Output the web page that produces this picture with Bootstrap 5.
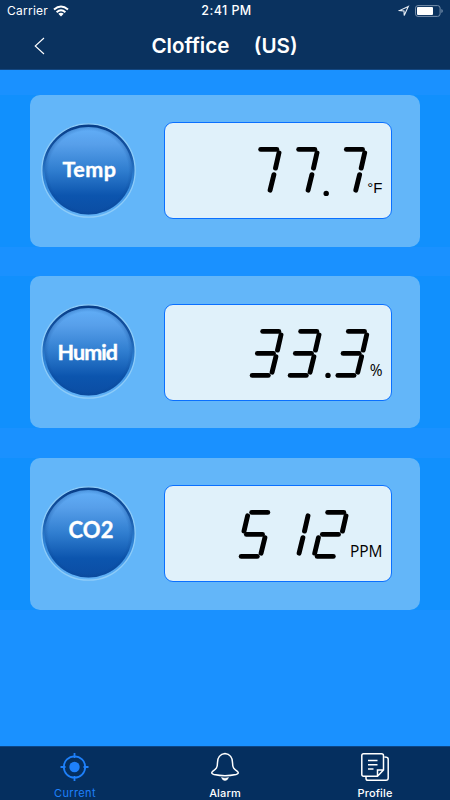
<!DOCTYPE html>
<html lang="en">
<head>
<meta charset="utf-8">
<meta name="viewport" content="width=device-width, initial-scale=1">
<title>Cloffice (US)</title>
<link rel="stylesheet" href="https://cdn.jsdelivr.net/npm/bootstrap@5.3.0/dist/css/bootstrap.min.css">
<style>
body{font-family:Inter,"Liberation Sans",sans-serif;background:#1a91ff;height:800px;overflow:hidden}
svg{display:block;flex:none}
.top-area{background:#0a325f;height:70px;border-bottom:1px solid #124681}
.status-line{height:22px;font-size:12px;padding:0 7px}
.status-line>div{flex:1 1 0}
.carrier{letter-spacing:.25px}
.clock{font-size:12.5px;font-weight:500;letter-spacing:.45px;padding:1px 0 0 3px}
.title-line{height:48px;padding:0 47px 0 34px}
.title-line h1{font-size:20.6px;font-weight:600;white-space:pre;word-spacing:.9px;margin:0;padding-top:1px}
.readings{padding-top:24.5px;gap:29.5px}
.band{background:#1190fd;padding:0 30px}
.reading{height:152px;background:#63b6f9;border-radius:10px;padding:0 28px 0 11px}
.dial-text{font-family:Lato,sans-serif;font-weight:700;fill:#fff;stroke:#fff;stroke-width:.4px}
.display{width:228px;height:97px;background:#e0f1fa;border:1px solid #0a70ff;border-radius:9px;padding-right:8.500px}
.unit{font-family:"Open Sans","Noto Sans",sans-serif;font-size:15.500px;line-height:18px;color:#000;margin:0 0 21px}
.unit-f{font-family:"Liberation Sans",sans-serif;font-size:15px}
.segments{fill:none;stroke:#000;stroke-width:4.9px;stroke-linecap:round;overflow:visible;margin:0 -.5px 22px 0}
.tabs{height:54px;background:#052f5f;border-top:1px solid #0c4585;font-size:11px;font-weight:500;letter-spacing:.15px}
.tabs a{color:#fff;text-decoration:none;padding-top:5px;line-height:14px}
.tabs a svg{margin-bottom:4px}
.tabs a.current{color:#1e80fa;font-weight:400;letter-spacing:.35px}
</style>
<script src="https://cdn.jsdelivr.net/npm/bootstrap@5.3.0/dist/js/bootstrap.bundle.min.js"></script>
</head>
<body class="d-flex flex-column">
<!-- Lit bars a-g of a slanted seven segment indicator -->
<svg width="0" height="0" class="position-absolute">
  <defs>
    <line id="a" x1="12.7" y1="2.4" x2="28.8" y2="2.4"/>
    <line id="b" x1="31" y1="5.8" x2="27.5" y2="21.1"/>
    <line id="c" x1="25.9" y1="27.7" x2="22.1" y2="43.2"/>
    <line id="d" x1="2.2" y1="46.4" x2="18.3" y2="46.4"/>
    <line id="e" x1="3.4" y1="27.7" x2="-.3" y2="43.2"/>
    <line id="f" x1="8.6" y1="5.8" x2="5" y2="21.1"/>
    <line id="g" x1="7.4" y1="24.4" x2="23.5" y2="24.4"/>
  </defs>
</svg>
<header class="top-area text-white">
  <div class="status-line d-flex align-items-center">
    <div class="d-flex align-items-center"><span class="carrier me-1">Carrier</span>
      <svg width="18" height="12" viewBox="0 0 18 12" fill="none" stroke="#fff" stroke-width="2"><path d="M2 4.500Q9-1.500 16 4.500M4.600 7.200Q9 3.300 13.400 7.200"/><path d="M9 11.500 6.300 8.800Q9 6.800 11.700 8.800Z" fill="#fff" stroke="none"/></svg>
    </div>
    <div class="clock text-center text-nowrap">2:41 PM</div>
    <div class="d-flex align-items-center justify-content-end gap-1">
      <svg width="12" height="12" viewBox="0 0 12 12" fill="none" stroke="#e8eef6" stroke-width="1.1"><path d="M10.300 1.500 1.500 5.600 6 6 6.200 10.500Z"/></svg>
      <svg width="29" height="12" viewBox="0 0 29 12"><rect x="1.5" y=".6" width="24.6" height="10.8" rx="2.5" fill="none" stroke="#7890ac"/><rect x="3" y="2" width="16" height="8" rx="1" fill="#fff"/><path d="M27.400 4v4q1.400-.6 1.400-2t-1.400-2Z" fill="#7890ac"/></svg>
    </div>
  </div>
  <div class="title-line d-flex align-items-center">
    <svg width="12" height="18" viewBox="0 0 12 18" fill="none" stroke="#fff" stroke-width="1.1"><path d="M10 1 1.200 9 10 17"/></svg>
    <h1 class="flex-grow-1 text-center">Cloffice    (US)</h1>
  </div>
</header>

<main class="readings flex-grow-1 d-flex flex-column">
  <div class="band"><section class="reading d-flex align-items-center justify-content-between">
    <svg width="96" height="96" viewBox="0 0 96 96">
      <defs>
        <linearGradient id="rim" x2="0" y2="1"><stop offset="0" stop-color="#063c87"/><stop offset=".3" stop-color="#1656a5"/><stop offset=".6" stop-color="#2f83d6"/><stop offset=".85" stop-color="#4fa3ee"/><stop offset="1" stop-color="#66b6f8"/></linearGradient>
        <linearGradient id="face" x2="0" y2="1"><stop offset="0" stop-color="#62aff8"/><stop offset=".2" stop-color="#579fea"/><stop offset=".5" stop-color="#2f7dcf"/><stop offset=".78" stop-color="#0c55ae"/><stop offset="1" stop-color="#0b4da3"/></linearGradient>
        <radialGradient id="shade"><stop offset=".91" stop-color="#063f8c" stop-opacity="0"/><stop offset="1" stop-color="#063f8c" stop-opacity=".25"/></radialGradient>
      </defs>
      <g id="dial"><circle cx="47.5" cy="47.5" r="46.7" fill="url(#rim)" stroke="#8dccf9" stroke-width="1.3"/><circle cx="47.5" cy="47.8" r="43.8" fill="url(#face)"/><circle cx="47.5" cy="47.8" r="43.8" fill="url(#shade)"/></g>
      <text class="dial-text" x="21.5" y="54" font-size="21.5" textLength="53.5">Temp</text>
    </svg>
    <div class="display d-flex align-items-end justify-content-end">
      <svg class="segments" width="120" height="49" role="img" aria-label="77.7">
        <g id="seven"><use href="#a"/><use href="#b"/><use href="#c"/></g>
        <use href="#seven" x="38"/>
        <circle cx="78.2" cy="46.4" r="2.7" fill="#000" stroke="none"/>
        <use href="#seven" x="85.7"/>
      </svg>
      <span class="unit unit-f">°F</span>
    </div>
  </section></div>

  <div class="band"><section class="reading d-flex align-items-center justify-content-between">
    <svg width="96" height="96" viewBox="0 0 96 96"><use href="#dial"/><text class="dial-text" x="16.5" y="55.5" font-size="21.5" textLength="60.5">Humid</text></svg>
    <div class="display d-flex align-items-end justify-content-end">
      <svg class="segments" width="120" height="49" role="img" aria-label="33.3">
        <g id="three"><use href="#a"/><use href="#b"/><use href="#g"/><use href="#c"/><use href="#d"/></g>
        <use href="#three" x="38"/>
        <circle cx="78" cy="46.4" r="2.7" fill="#000" stroke="none"/>
        <use href="#three" x="85.7"/>
      </svg>
      <span class="unit">%</span>
    </div>
  </section></div>

  <div class="band"><section class="reading d-flex align-items-center justify-content-between">
    <svg width="96" height="96" viewBox="0 0 96 96"><use href="#dial"/><text class="dial-text" x="27.5" y="52" font-size="22" textLength="45">CO2</text></svg>
    <div class="display d-flex align-items-end justify-content-end">
      <svg class="segments" width="111" height="49" role="img" aria-label="512">
        <g><use href="#a"/><use href="#f"/><use href="#g"/><use href="#c"/><use href="#d"/></g>
        <g transform="translate(38)"><use href="#b"/><use href="#c"/></g>
        <g transform="translate(76)"><use href="#a"/><use href="#b"/><use href="#g"/><use href="#e"/><use href="#d"/></g>
      </svg>
      <span class="unit">PPM</span>
    </div>
  </section></div>
</main>

<nav class="tabs d-flex">
  <a href="#" class="current flex-fill w-100 d-flex flex-column align-items-center">
    <svg width="30" height="30" viewBox="0 0 30 30" fill="none" stroke="#1e80fa" stroke-width="1.8"><circle cx="14.5" cy="15" r="10.7"/><circle cx="14.5" cy="15" r="5.2" fill="#1e80fa" stroke="none"/><path d="M14.500 1v5M14.500 24v5M.5 15h5M23.500 15h5"/></svg>Current</a>
  <a href="#" class="flex-fill w-100 d-flex flex-column align-items-center">
    <svg width="30" height="30" viewBox="0 0 30 30" fill="none" stroke="#fff" stroke-width="1.5"><path d="M15 1.500C10 2 7.500 6 7.500 10.500 7.500 16 6 17 2.500 19.500 1 21 2 22 4 22.500 11 24 19 24 26 22.500 28 22 29 21 27.500 19.500 24 17 22.500 16 22.500 10.500 22.500 6 20 2 15 1.500Z"/><path d="M11.500 25.500Q15 27 18.500 25.500 17.500 28.500 15 28.500T11.500 25.500Z" fill="#fff" stroke-width=".5"/></svg>Alarm</a>
  <a href="#" class="flex-fill w-100 d-flex flex-column align-items-center">
    <svg width="30" height="30" viewBox="0 0 30 30" fill="none" stroke="#fff" stroke-width="1.5"><path d="M3.500 1.800H21.500Q23.500 1.800 23.500 3.800V18L17.500 24.200H3.500Q1.800 24.200 1.800 22.500V3.500Q1.800 1.800 3.500 1.800ZM17.500 24.200V18H23.500M6 25v1.500Q6 28.300 8 28.300H26Q28.200 28.300 28.200 26V7Q28.200 5 24.500 5M8 8.500H17.500M8 12.700H17.500M8 17H13.500"/></svg>Profile</a>
</nav>
</body>
</html>
